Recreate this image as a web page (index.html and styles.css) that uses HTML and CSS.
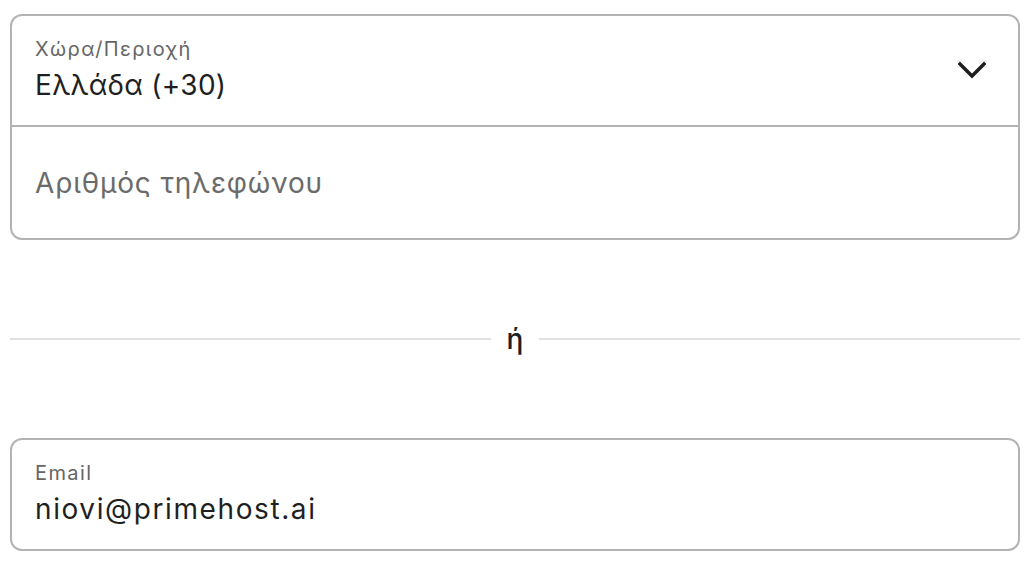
FILE: index.html
```html
<!DOCTYPE html>
<html lang="el">
<head>
<meta charset="utf-8">
<link rel="stylesheet" href="styles.css">
</head>
<body>
<div class="page">
  <div class="group">
    <div class="field select">
      <div class="field-text">
        <div class="label">Χώρα/Περιοχή</div>
        <div class="value">Ελλάδα (+30)</div>
      </div>
      <svg class="chevron" width="28" height="20" viewBox="0 0 28 20" aria-hidden="true">
        <polyline points="2,3 14,15 26,3" fill="none" stroke="#1f1f1f" stroke-width="3.4" stroke-linecap="square"/>
      </svg>
    </div>
    <div class="field phone">
      <div class="placeholder">Αριθμός τηλεφώνου</div>
    </div>
  </div>

  <div class="separator">
    <span class="line"></span>
    <span class="or">ή</span>
    <span class="line"></span>
  </div>

  <div class="group">
    <div class="field">
      <div class="field-text">
        <div class="label">Email</div>
        <div class="value value-latin">niovi@primehost.ai</div>
      </div>
    </div>
  </div>
</div>
</body>
</html>
```

FILE: styles.css
```css
html, body {
  margin: 0;
  padding: 0;
  background: #ffffff;
}

body {
  font-family: Inter, Roboto, "Noto Sans", "DejaVu Sans", sans-serif;
  color: #1f1f1f;
}

.page {
  padding: 14px 4px 0 10px;
  display: flex;
  flex-direction: column;
}

.group {
  border: 2px solid #b3b3b3;
  border-radius: 12px;
  display: flex;
  flex-direction: column;
}

.field {
  display: flex;
  align-items: center;
  padding: 21px 32px 0 23px;
  height: 109px;
  box-sizing: border-box;
}

.field-text {
  display: flex;
  flex-direction: column;
  gap: 7px;
  flex: 1;
  align-self: flex-start;
}

.select {
  border-bottom: 2px solid #b3b3b3;
  height: 111px;
}

.label {
  font-size: 20px;
  line-height: 24px;
  letter-spacing: 1.4px;
  color: #666666;
}

.value {
  font-size: 28px;
  line-height: 34px;
  letter-spacing: 0.3px;
  color: #1f1f1f;
}

.value-latin {
  letter-spacing: 1.6px;
}

.chevron {
  display: block;
  margin-top: -21px;
}

.phone {
  padding-top: 0;
  height: 111px;
}

.placeholder {
  font-size: 28px;
  line-height: 34px;
  letter-spacing: 0.85px;
  color: #6b6b6b;
}

.separator {
  display: flex;
  align-items: center;
  gap: 16px;
  margin: 84px 0;
  height: 30px;
}

.line {
  flex: 1;
  height: 2px;
  background: #e0e0e0;
}

.or {
  font-size: 28px;
  line-height: 30px;
  font-weight: 500;
  color: #1f1f1f;
}
```
